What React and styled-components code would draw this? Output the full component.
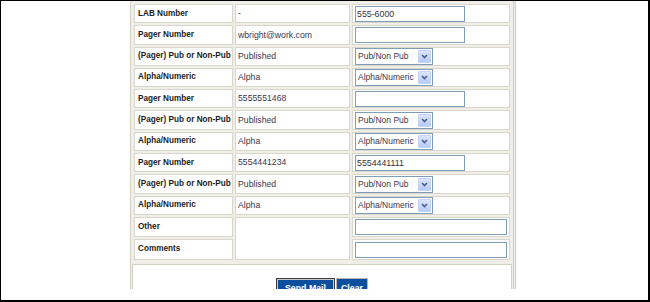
import React from 'react';
import styled, { createGlobalStyle } from 'styled-components';

const GlobalStyle = createGlobalStyle`
  * {
    box-sizing: border-box;
  }

  html,
  body {
    margin: 0;
    padding: 0;
    background: #fff;
  }

  body {
    font-family: "Liberation Sans", Arial, sans-serif;
  }
`;

const Frame = styled.div`
  width: 650px;
  height: 302px;
  border-style: solid;
  border-color: #000;
  border-width: 1px 2px 2px 1px;
  background: #fff;
  overflow: hidden;
`;

const Viewport = styled.div`
  height: 288px;
  overflow: hidden;
  padding-left: 129px;
`;

const Wrapper = styled.div`
  width: 386px;
  margin-top: -1px;
  border: 1px solid #d3d0c4;
  border-right: 3px double #d3d0c4;
  padding: 1px;
  background: #efeee8;
`;

const FormTable = styled.table`
  width: 380px;
  border-collapse: separate;
  border-spacing: 2px;
  table-layout: fixed;
`;

const Row = styled.tr`
  height: ${(props) => (props.$tall ? '20.4px' : '19.3px')};
`;

const Cell = styled.td`
  height: ${(props) => (props.$tall ? '20.4px' : '19.3px')};
  padding: 0 2px;
  border: 1px solid #d9d7cc;
  background: #fff;
  vertical-align: middle;
  white-space: nowrap;
  overflow: hidden;
  font-size: 8.7px;
  line-height: 1;
  color: #3d3548;
`;

const LabelCell = styled(Cell)`
  padding-left: 3px;
  font-size: 8.2px;
  font-weight: bold;
  color: #1c1c1c;
`;

const TextBox = styled.input`
  display: block;
  width: ${(props) => props.$width}px;
  height: 16px;
  margin: 0;
  padding: 0 1px;
  border: 1px solid #7f9db9;
  background: #fff;
  font-family: "Liberation Sans", Arial, sans-serif;
  font-size: 8.8px;
  color: #333;
  outline: none;
`;

const Combo = styled.div`
  display: flex;
  align-items: center;
  width: ${(props) => props.$width}px;
  height: 17px;
  border: 1px solid #7f9db9;
  background: #fff;
  padding-left: 2px;
  font-size: 8.5px;
  line-height: 1;
  color: #3d3548;
`;

const ComboText = styled.span`
  flex: 1;
  overflow: hidden;
  white-space: nowrap;
`;

const ArrowBox = styled.span`
  display: flex;
  flex: none;
  align-items: center;
  justify-content: center;
  width: 13px;
  height: 13px;
  margin-right: 1px;
  border: 1px solid #c3d3fd;
  border-radius: 1px;
  background: linear-gradient(#dbe5fb, #b7cbf6);
`;

const ButtonPanel = styled.div`
  display: flex;
  justify-content: center;
  align-items: flex-start;
  gap: 1px;
  height: 60px;
  margin-top: 2px;
  padding-top: 13px;
  border: 1px solid #d3d0c4;
  background: #fff;
`;

const Button = styled.button`
  height: 19px;
  padding: 1px ${(props) => props.$pad}px 0;
  border: 1px solid ${(props) => (props.$primary ? '#3c3c3c' : '#b5b5b5')};
  box-shadow: ${(props) => (props.$primary ? 'inset 0 0 0 1px #c9c9c9' : 'none')};
  background: #0c4f9f;
  color: #fff;
  font-family: "Liberation Sans", Arial, sans-serif;
  font-size: 8.8px;
  font-weight: bold;
  line-height: 10px;
  cursor: pointer;
`;

function Chevron() {
  return (
    <svg width="7" height="5" viewBox="0 0 7 5">
      <path d="M1 1 L3.5 3.6 L6 1" fill="none" stroke="#4d6185" strokeWidth="1.6" />
    </svg>
  );
}

function Field({ field }) {
  if (field.type === 'select') {
    return (
      <Combo $width={field.width}>
        <ComboText>{field.value}</ComboText>
        <ArrowBox>
          <Chevron />
        </ArrowBox>
      </Combo>
    );
  }
  return <TextBox type="text" readOnly defaultValue={field.value} $width={field.width} />;
}

const pager = (number, field) => [
  { label: 'Pager Number', value: number, field: { type: 'text', value: field, width: 110 } },
  { label: '(Pager) Pub or Non-Pub', value: 'Published', field: { type: 'select', value: 'Pub/Non Pub', width: 78 } },
  { label: 'Alpha/Numeric', value: 'Alpha', field: { type: 'select', value: 'Alpha/Numeric', width: 78 } },
];

const rows = [
  { label: 'LAB Number', value: '-', field: { type: 'text', value: '555-6000', width: 110 } },
  ...pager('wbright@work.com', ''),
  ...pager('5555551468', ''),
  ...pager('5554441234', '5554441111'),
];

export default function App() {
  return (
    <>
      <GlobalStyle />
      <Frame>
        <Viewport>
          <Wrapper>
            <FormTable>
              <colgroup>
                <col style={{ width: 99 }} />
                <col style={{ width: 115 }} />
                <col style={{ width: 158 }} />
              </colgroup>
              <tbody>
                {rows.map((row, i) => (
                  <Row key={i}>
                    <LabelCell>{row.label}</LabelCell>
                    <Cell>{row.value}</Cell>
                    <Cell>
                      <Field field={row.field} />
                    </Cell>
                  </Row>
                ))}
                <Row $tall>
                  <LabelCell $tall>Other</LabelCell>
                  <Cell $tall rowSpan={2} />
                  <Cell $tall>
                    <TextBox type="text" readOnly defaultValue="" $width={152} />
                  </Cell>
                </Row>
                <Row $tall>
                  <LabelCell $tall>Comments</LabelCell>
                  <Cell $tall>
                    <TextBox type="text" readOnly defaultValue="" $width={152} />
                  </Cell>
                </Row>
              </tbody>
            </FormTable>
            <ButtonPanel>
              <Button type="button" $primary $pad={8}>Send Mail</Button>
              <Button type="button" $pad={4}>Clear</Button>
            </ButtonPanel>
          </Wrapper>
        </Viewport>
      </Frame>
    </>
  );
}
